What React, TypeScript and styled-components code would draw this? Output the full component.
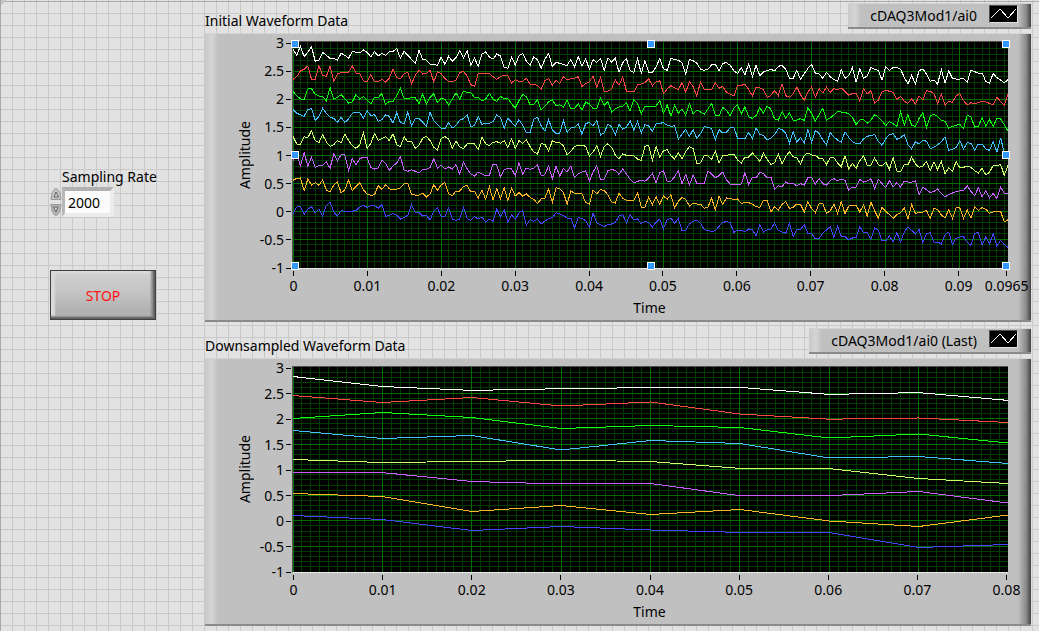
import React from 'react';
import styled, { createGlobalStyle } from 'styled-components';

const GlobalStyle = createGlobalStyle`
  * { box-sizing: border-box; }
  html, body { margin: 0; min-height: 100%; }
  body {
    font: 14px/20px 'Noto Sans', 'Open Sans', sans-serif;
    color: #000;
    background-color: #e2e2e2;
    background-image:
      linear-gradient(to right, #c9c9c9 1px, transparent 1px),
      linear-gradient(to bottom, #c9c9c9 1px, transparent 1px);
    background-size: 12px 12px;
    background-position: 0 1px;
  }
`;

/* ---------- page frame ---------- */

const FrontPanel = styled.main`
  display: flex;
  min-height: 100vh;
  border-left: 1px solid #a8a8a8;
  padding-right: 8px;
  background:
    linear-gradient(135deg, #c4c4c4 4px, transparent 4px) 0 0 / 6px 6px no-repeat,
    linear-gradient(#acacac, #acacac) 0 1px / 100% 1px no-repeat;
`;

const Controls = styled.section`
  flex: 0 0 204px;
  padding: 167px 0 0 49px;
`;

const Graphs = styled.section`
  display: flex;
  flex-direction: column;
  gap: 6px;
  flex: 1;
  min-width: 0;
  padding-top: 3px;
`;

/* ---------- numeric control ---------- */

const ControlLabel = styled.label`
  display: block;
  padding-left: 12px;
  white-space: nowrap;
`;

const NumericRow = styled.div`
  display: flex;
  align-items: center;
  height: 30px;
`;

const Spinner = styled.div`
  display: flex;
  flex-direction: column;
  justify-content: space-between;
  width: 12px;
  height: 30px;
`;

const SpinButton = styled.button`
  display: block;
  width: 12px;
  height: 14px;
  padding: 0;
  border: 0;
  background: none;
  svg { display: block; }
`;

const NumericInput = styled.input`
  width: 52px;
  height: 30px;
  padding: 0 0 0 3px;
  font: inherit;
  color: #000;
  background: #fbfbfb;
  background-clip: padding-box;
  border-style: solid;
  border-width: 4px 4px 4px 3px;
  border-color: #b0b0b0 #ececec #ececec #b8b8b8;
  border-radius: 0;
  outline: 0;
`;

/* ---------- stop button ---------- */

const StopButton = styled.button`
  display: block;
  width: 106px;
  height: 50px;
  margin-top: 53px;
  padding: 2px 0 0;
  font: inherit;
  color: #ff1010;
  background: linear-gradient(#d0d0d0, #c6c6c6 40%, #b0b0b0 85%, #bcbcbc);
  border: 1px solid #404040;
  box-shadow:
    inset -1px -1px 0 #606060,
    inset -2px -2px 1px #6c6c6c,
    inset -4px -3px 2px #8c8c8c,
    inset 4px 3px 2px #dadada;
`;

/* ---------- graph ---------- */

const Header = styled.header`
  display: flex;
  justify-content: space-between;
  align-items: flex-start;
  height: 30px;
`;

const Title = styled.h2`
  margin: 0;
  padding-top: 8px;
  font: inherit;
  white-space: nowrap;
`;

const bevel = `
  background:
    linear-gradient(to right, #cacaca, #d4d4d4 7px, #c0c0c0 13px, transparent 13px),
    linear-gradient(to left, #404040, #606060 2px, #8c8c8c 5px, #c0c0c0 13px, transparent 13px),
    #c0c0c0;
  border-top: 1px solid #d4d4d4;
  border-bottom: 2px solid #8a8a8a;
`;

const Legend = styled.div`
  ${bevel}
  display: flex;
  align-items: flex-start;
  gap: 12px;
  height: 26px;
  padding: 0 13px 0 22px;
  white-space: nowrap;
`;

const LegendName = styled.span`
  line-height: 24px;
`;

const Swatch = styled.svg`
  display: block;
  width: 29px;
  height: 18px;
  margin-top: 1px;
  background: #000;
  border: 1px solid #e0e0e0;
  border-top-color: #505050;
  border-left-color: #505050;
`;

const Body = styled.div`
  ${bevel}
  display: grid;
  grid-template-columns: 30px 57px minmax(0, 1fr);
  padding: 7px 23px 2px 0;
`;

const AxisTitleY = styled.div`
  writing-mode: vertical-rl;
  transform: rotate(180deg);
  justify-self: end;
  align-self: center;
  line-height: 20px;
  margin-right: -20px;
  white-space: nowrap;
`;

const YScale = styled.div`
  display: flex;
  flex-direction: column;
  justify-content: space-between;
  margin: -6px 0 -7px;
`;

const YTick = styled.div`
  display: flex;
  align-items: center;
  justify-content: flex-end;
  gap: 2px;
  height: 16px;
  line-height: 16px;
  padding-right: 1px;
  &::after {
    content: '';
    width: 5px;
    height: 1px;
    background: #000;
  }
`;

const Plot = styled.div<{ $height: number }>`
  position: relative;
  height: ${(p) => p.$height}px;
  background: #000;
  border: 1px solid #505050;
  border-width: 1px 0 1px 1px;
  border-bottom-color: #e8e8e8;
`;

const PlotSvg = styled.svg`
  display: block;
  width: 100%;
  height: 100%;
  overflow: hidden;
  path, polyline { vector-effect: non-scaling-stroke; fill: none; }
`;

const Handle = styled.span<{ $x: number; $y: number }>`
  position: absolute;
  left: calc((100% - 4px) * ${(p) => p.$x} + 2px);
  top: calc((100% - 4px) * ${(p) => p.$y} + 2px);
  width: 8px;
  height: 8px;
  margin: -4px;
  background: #3399ff;
  border: 1px solid #fff;
`;

const XAxis = styled.div`
  grid-column: 3;
  padding: 2px 2px 0 1px;
`;

const XScale = styled.div`
  display: flex;
`;

const XCell = styled.div<{ $span: number }>`
  flex: ${(p) => p.$span} 1 0;
  min-width: 0;
`;

const XTick = styled.div`
  display: flex;
  flex-direction: column;
  align-items: center;
  width: 1px;
  line-height: 20px;
  white-space: nowrap;
  &::before {
    content: '';
    width: 1px;
    height: 5px;
    background: #000;
  }
`;

const AxisTitleX = styled.div`
  text-align: center;
  margin-top: 2px;
`;

/* ---------- data ---------- */

const COLORS = ['#ffffff', '#ff4545', '#10ff10', '#45bfff', '#d0ff70', '#c860ff', '#ffb52a', '#4545ff'];

/* Samples are in plot units: 168 per amplitude step of 1, with 3.0 at 16. */
const INITIAL = [
  `34 52 24 56 43 26 70 67 43 52 61 62 66 46 52 61 40 43 45 36 43 56 41 54 46 52 41 40 32 61 40 52
   64 76 37 64 66 79 79 82 57 79 55 70 59 38 60 38 82 61 85 48 42 57 63 48 54 88 91 58 81 54 46 70
   82 56 66 90 64 46 86 73 76 80 82 64 86 56 84 62 94 65 73 61 98 60 72 60 103 74 62 97 104 62 106 68
   103 103 87 62 92 97 62 64 67 74 108 65 68 76 93 97 94 80 79 99 76 74 82 98 107 88 110 77 116 82 113 102 98
   94 99 85 82 94 120 121 97 124 107 91 80 106 108 121 103 116 125 130 95 121 113 89 132 92 121 114 88 94 97 127 86
   97 88 89 94 118 138 112 138 98 93 108 130 126 138 95 135 99 121 123 123 121 132 97 101 106 105 130 135 107 119 126 135 124`,
  `124 116 99 94 84 124 124 83 112 115 84 130 108 103 103 102 84 105 107 128 132 109 132 130 124 132 120 93 119 122 107 103
   138 112 96 108 107 97 132 101 107 122 130 132 126 104 100 114 140 145 107 106 106 106 116 124 116 112 114 135 125 130 130 121
   139 139 143 153 128 122 142 126 137 116 126 122 121 116 145 137 132 114 149 118 162 160 152 126 142 116 159 161 162 140 138 134
   122 144 132 128 167 153 143 149 155 134 163 131 146 174 131 154 154 154 134 151 145 163 168 174 143 142 139 154 174 148 149 156 178
   172 158 173 137 173 178 167 147 170 187 162 147 178 152 165 147 163 152 155 150 160 171 167 165 189 152 168 158 195 186 162 156
   160 163 184 175 190 196 182 198 174 186 158 160 166 197 168 202 190 193 174 166 188 201 194 198 194 190 192 196 200 178 190 202 168`,
  `160 174 182 186 153 152 169 174 176 188 149 184 178 170 182 195 192 170 183 176 187 198 178 179 167 199 190 190 173 152 182 182
   178 178 198 167 199 178 167 194 180 184 201 184 164 184 160 163 164 178 178 189 183 166 183 190 175 182 182 197 210 188 169 176
   201 198 186 216 204 192 185 204 200 207 186 212 211 198 216 192 198 212 213 180 202 191 222 213 207 204 195 219 186 196 228 204
   204 205 204 188 226 201 234 201 226 213 231 197 228 216 222 229 213 196 231 234 208 217 233 210 201 228 206 237 241 233 209 226 204
   214 243 246 221 240 225 247 246 242 247 209 227 250 230 211 246 240 231 221 222 223 228 238 260 246 244 256 247 230 237 249 263
   251 257 265 221 261 230 262 265 241 224 268 234 228 236 246 250 270 265 262 259 272 231 237 267 265 239 264 244 266 241 243 260 280`,
  `214 226 230 235 214 212 247 235 211 226 238 241 253 238 253 243 226 222 224 240 218 233 230 250 245 230 235 256 223 254 256 222
   264 241 242 252 265 223 248 260 270 272 254 270 262 246 242 230 266 262 236 259 256 256 250 231 238 271 240 253 265 245 262 285
   283 243 238 264 279 245 275 286 285 248 283 270 269 257 289 257 253 264 248 291 285 258 267 290 259 273 268 248 276 251 285 260
   264 280 258 256 254 262 265 263 303 289 274 295 275 301 287 266 268 272 306 275 285 283 269 268 300 300 303 283 302 270 289 293 306
   300 290 272 275 285 316 281 312 299 315 275 313 277 286 305 320 284 297 306 313 281 298 311 316 317 303 295 292 290 310 322 302
   290 287 304 299 290 320 333 311 318 306 310 332 328 320 312 296 337 334 328 308 333 314 316 336 318 318 333 337 311 342 299 345 345`,
  `295 318 320 296 299 278 308 314 290 312 325 320 308 314 288 307 323 331 320 284 331 316 287 307 301 296 308 287 320 326 296 312
   310 331 322 301 295 308 328 336 301 296 302 331 308 327 332 318 316 318 335 298 317 323 313 311 316 308 328 302 331 308 316 305
   326 342 348 317 319 340 308 313 315 323 351 340 325 322 322 325 354 342 323 355 326 317 328 351 363 348 352 352 353 363 367 325
   322 367 326 357 338 335 353 363 344 362 341 326 331 376 375 352 354 364 339 375 352 352 350 349 366 375 357 357 345 357 370 346 364
   379 374 348 378 355 341 356 359 378 352 345 351 352 361 362 380 358 359 375 386 353 393 376 391 368 353 382 382 360 380 384 372
   394 359 399 402 380 380 357 378 388 384 370 398 372 395 370 407 390 400 371 390 388 384 388 398 405 391 410 403 382 383 379 412 382`,
  `368 346 384 344 384 358 388 382 382 371 391 347 368 350 351 397 362 381 362 358 359 388 393 390 366 377 397 384 375 356 397 400
   395 400 405 394 394 389 362 390 381 393 387 393 380 409 372 392 408 414 402 408 414 413 378 381 417 396 391 393 413 374 408 390
   394 390 381 414 410 383 423 384 415 391 402 384 419 408 402 398 429 402 384 424 423 398 395 397 409 393 408 424 434 430 426 430
   420 406 434 404 399 430 430 416 398 437 410 441 411 436 436 436 399 408 419 413 402 425 438 439 439 438 404 440 417 420 403 407 420
   417 454 443 447 432 438 437 443 437 441 419 419 438 422 437 442 428 422 428 424 427 457 447 447 425 432 429 422 452 424 437 449
   428 447 434 447 429 432 432 429 470 448 455 464 460 453 467 477 470 465 461 458 457 444 460 473 449 477 458 480 466 482 447 466 466`,
  `427 421 420 458 423 441 434 442 426 456 462 441 432 465 455 426 458 445 434 455 468 472 470 443 454 440 452 456 453 450 437 437
   470 471 471 466 477 468 440 457 440 434 467 473 459 459 446 442 462 460 480 456 484 446 486 452 482 450 488 450 474 464 474 468
   478 484 496 483 480 453 493 449 453 464 498 459 466 467 467 494 498 456 467 455 458 470 492 495 465 481 487 488 488 464 507 507
   477 500 476 499 474 484 470 510 490 479 484 504 496 498 498 511 508 480 516 474 500 480 481 486 483 496 494 494 499 506 508 486 486
   522 506 516 499 491 511 508 498 500 522 491 512 524 497 497 526 519 498 526 491 527 504 503 501 522 500 535 492 518 541 508 520
   530 541 530 524 510 543 500 526 524 522 517 541 511 514 531 540 515 541 509 510 541 516 540 506 518 508 514 526 522 521 520 552 545`,
  `529 507 506 529 513 506 525 514 534 502 492 522 534 518 520 522 520 517 507 502 508 503 503 511 500 535 532 526 532 543 538 532
   500 524 524 534 532 546 519 510 536 535 509 543 547 544 509 541 547 536 543 537 552 543 550 513 536 515 552 530 545 524 518 561
   545 550 543 558 549 542 539 524 528 533 540 540 570 539 541 548 567 525 555 560 566 560 558 553 534 530 555 530 546 543 557 550
   554 567 553 543 572 545 540 556 541 577 577 558 550 546 556 575 577 581 578 565 553 551 554 583 577 576 582 573 575 594 560 582 575
   573 555 577 582 586 556 595 574 575 560 586 586 603 602 585 576 566 598 564 595 596 606 600 598 565 585 584 605 570 576 608 609
   594 612 584 612 582 567 577 588 574 614 587 584 612 612 618 590 582 620 601 597 596 614 622 586 584 620 597 618 586 624 607 620 628`,
];

/* Samples are in plot units: 511 per amplitude step of 1, with 3.0 at 5. */
const DOWNSAMPLED = [
  '95 195 234 217 206 204 274 256 334',
  '285 355 305 390 350 470 522 510 555',
  '515 455 505 615 585 605 710 670 760',
  '635 715 685 830 735 765 910 895 965',
  '925 955 945 932 945 1014 1016 1115 1165',
  '1054 1056 1145 1170 1165 1287 1286 1245 1360',
  '1265 1295 1445 1385 1475 1425 1540 1595 1480',
  '1485 1525 1635 1595 1630 1654 1656 1805 1775',
];

const Y_LABELS = ['3', '2.5', '2', '1.5', '1', '0.5', '0', '-0.5', '-1'];

interface GraphProps {
  title: string;
  legend: string;
  height: number;
  traces: string[];
  /* top and height of the visible span in plot units */
  view: [number, number];
  /* position of 3.0, and the distance of one amplitude step */
  scale: [number, number];
  xLabels: string[];
  /* hundredths of a second from the first to the last label */
  duration: number;
  selected?: boolean;
}

const W = 1000;

function gridPath(kind: 'major' | 'minor', { view, scale, duration }: GraphProps) {
  const d: string[] = [];
  for (let i = 0; i <= duration * 10; i++) {
    if ((i % 10 === 0) !== (kind === 'major')) continue;
    const x = (i / (duration * 10)) * W;
    d.push(`M${x} ${view[0]}v${view[1]}`);
  }
  for (let i = 1; i < 40; i++) {
    if ((i % 5 === 0) !== (kind === 'major')) continue;
    d.push(`M0 ${scale[0] + (i * scale[1]) / 10}h${W}`);
  }
  return d.join('');
}

function points(trace: string) {
  const v = trace.trim().split(/\s+/);
  return v.map((y, i) => `${((i / (v.length - 1)) * W).toFixed(2)},${y}`).join(' ');
}

function Graph(props: GraphProps) {
  const { title, legend, height, traces, view, xLabels, duration, selected } = props;
  return (
    <article>
      <Header>
        <Title>{title}</Title>
        <Legend>
          <LegendName>{legend}</LegendName>
          <Swatch viewBox="0 0 27 16" aria-hidden="true">
            <path d="M1 12 L10 3 L18 12 L26 3" fill="none" stroke="#fff" shapeRendering="crispEdges" />
          </Swatch>
        </Legend>
      </Header>
      <Body>
        <AxisTitleY>Amplitude</AxisTitleY>
        <YScale>
          {Y_LABELS.map((y) => <YTick key={y}>{y}</YTick>)}
        </YScale>
        <Plot $height={height}>
          <PlotSvg
            viewBox={`0 ${view[0]} ${W} ${view[1]}`}
            preserveAspectRatio="none"
            shapeRendering="crispEdges"
            role="img"
            aria-label={title}
          >
            <path d={gridPath('minor', props)} stroke="#003c00" />
            <path d={gridPath('major', props)} stroke="#006e00" />
            {traces.map((t, i) => (
              <polyline key={i} points={points(t)} stroke={COLORS[i]} />
            ))}
          </PlotSvg>
          {selected &&
            [[0, 0], [0.5, 0], [1, 0], [0, 0.5], [1, 0.5], [0, 1], [0.5, 1], [1, 1]].map(([x, y]) => (
              <Handle key={`${x}-${y}`} $x={x} $y={y} />
            ))}
        </Plot>
        <XAxis>
          <XScale>
            {xLabels.map((x, i) => {
              const last = i === xLabels.length - 1;
              const span = last ? 0 : Math.min(1, duration - i);
              return (
                <XCell key={x} $span={span}>
                  <XTick>{x}</XTick>
                </XCell>
              );
            })}
          </XScale>
          <AxisTitleX>Time</AxisTitleX>
        </XAxis>
      </Body>
    </article>
  );
}

function Arrow({ down }: { down?: boolean }) {
  return (
    <svg width="12" height="14" viewBox="0 0 12 14" aria-hidden="true">
      <g transform={down ? 'rotate(180 6 7)' : undefined}>
        <path d="M1 12.500L2 6Q6 -3 10 6L11 12.500Z" fill={down ? '#b4b4b4' : '#c4c4c4'} stroke="#9a9a9a" />
        <path d="M4 10L6 5L8.500 10Z" fill="#d8d8d8" stroke="#606060" />
      </g>
    </svg>
  );
}

export default function App() {
  return (
    <>
      <GlobalStyle />
      <FrontPanel>
        <Controls>
          <ControlLabel htmlFor="rate">Sampling Rate</ControlLabel>
          <NumericRow>
            <Spinner>
              <SpinButton type="button" aria-label="Increase"><Arrow /></SpinButton>
              <SpinButton type="button" aria-label="Decrease"><Arrow down /></SpinButton>
            </Spinner>
            <NumericInput id="rate" inputMode="numeric" defaultValue="2000" />
          </NumericRow>
          <StopButton type="button">STOP</StopButton>
        </Controls>
        <Graphs>
          <Graph
            title="Initial Waveform Data"
            legend="cDAQ3Mod1/ai0"
            height={228}
            traces={INITIAL}
            view={[12, 678]}
            scale={[16, 168]}
            xLabels={['0', '0.01', '0.02', '0.03', '0.04', '0.05', '0.06', '0.07', '0.08', '0.09', '0.0965']}
            duration={9.65}
            selected
          />
          <Graph
            title="Downsampled Waveform Data"
            legend="cDAQ3Mod1/ai0 (Last)"
            height={207}
            traces={DOWNSAMPLED}
            view={[0, 2050]}
            scale={[5, 511]}
            xLabels={['0', '0.01', '0.02', '0.03', '0.04', '0.05', '0.06', '0.07', '0.08']}
            duration={8}
          />
        </Graphs>
      </FrontPanel>
    </>
  );
}
